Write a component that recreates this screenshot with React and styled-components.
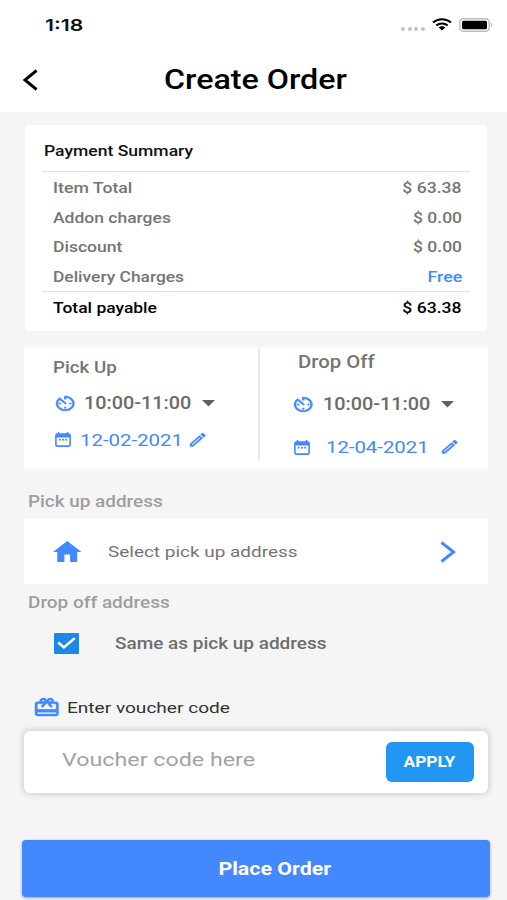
import React from 'react';
import styled, { createGlobalStyle } from 'styled-components';

const GlobalStyle = createGlobalStyle`
  * { box-sizing: border-box; }
  body { margin: 0; background: #f5f5f5; font-family: Roboto, sans-serif; overflow: hidden; }
`;

const Screen = styled.main`
  width: 507px;
  height: 900px;
  overflow: hidden;
  display: flex;
  flex-direction: column;
  background: #f5f5f5;
`;

const Text = styled.span`
  display: block;
  flex: none;
  margin: 0;
  white-space: nowrap;
  font-size: ${(p) => p.$size || 15}px;
  font-weight: ${(p) => p.$weight || 500};
  color: ${(p) => p.$color || '#757575'};
  transform: scaleX(${(p) => p.$stretch || 1.17});
  transform-origin: ${(p) => p.$origin || 'left'} center;
`;

const Icon = styled.svg.attrs({ preserveAspectRatio: 'none', 'aria-hidden': true })`
  display: block;
  flex: none;
  overflow: visible;
  width: ${(p) => p.$w}px;
  height: ${(p) => p.$h}px;
  fill: ${(p) => p.$color || '#4388fd'};
`;

const BoldIcon = styled(Icon)`
  stroke: #4388fd;
  stroke-width: 0.4;
`;

const Header = styled.header`
  height: 111.5px;
  flex: none;
  background: #fff;
`;

const StatusBar = styled.div`
  height: 49px;
  padding: 0 14.5px 0 44.5px;
  display: flex;
  align-items: center;
  justify-content: space-between;
`;

const Clock = styled(Text)`
  font-family: Inter, sans-serif;
`;

const StatusIcons = styled.div`
  display: flex;
  align-items: center;
  gap: 7px;
`;

const SignalDots = styled.div`
  display: flex;
  gap: 2.5px;
  padding-top: 9px;
`;

const Dot = styled.i`
  width: 4px;
  height: 4px;
  border-radius: 50%;
  background: #c4c4c4;
`;

const TitleBar = styled.div`
  height: 61px;
  display: grid;
  grid-template-columns: 23px 141px 1fr;
  align-items: center;
`;

const BackIcon = styled(Icon)`
  grid-column: 2;
  margin-top: 1px;
`;

const Card = styled.section`
  flex: none;
  background: #fff;
  margin: 0 19px 0 24px;
`;

const SummaryCard = styled(Card)`
  margin: 13.5px 20px 0 25px;
  height: 206px;
  border-radius: 4px;
  padding: 4px 17px 0;
`;

const SummaryTitle = styled.div`
  height: 43px;
  padding: 1px 0 0 2px;
  display: flex;
  align-items: center;
  border-bottom: 1px solid #e2e2e2;
`;

const SummaryRows = styled.div`
  height: 120px;
  padding-top: 1px;
  border-bottom: 1px solid #e2e2e2;
`;

const SummaryRow = styled.div`
  height: 29.75px;
  padding: 0 8px 0 11px;
  display: flex;
  align-items: center;
  justify-content: space-between;
`;

const TotalRow = styled(SummaryRow)`
  height: 31px;
`;

const ScheduleCard = styled(Card)`
  margin-top: 15.5px;
  height: 122px;
  display: grid;
  grid-template-columns: 234px 2px 1fr;
`;

const Divider = styled.div`
  height: 113px;
  margin-top: 1px;
  background: #e8e8e8;
`;

const Slot = styled.div`
  padding: ${(p) => p.$pad};
`;

const SlotLine = styled.div`
  display: flex;
  align-items: center;
  height: ${(p) => p.$h}px;
  padding-left: ${(p) => p.$indent || 0}px;
`;

const SlotValue = styled.div`
  width: ${(p) => p.$w}px;
  margin-left: ${(p) => p.$gap}px;
`;

const SectionLabel = styled.div`
  flex: none;
  height: ${(p) => p.$h}px;
  padding: ${(p) => p.$top || 0}px 0 0 27.5px;
  display: flex;
  align-items: center;
`;

const AddressCard = styled(Card)`
  height: 65.5px;
  padding: 1px 33px 0 28.5px;
  display: flex;
  align-items: center;
`;

const AddressText = styled.div`
  flex: 1;
  margin-left: 26.5px;
`;

const CheckRow = styled.label`
  flex: none;
  height: 44px;
  padding-left: 53.5px;
  display: flex;
  align-items: center;
  gap: 36.5px;
`;

const CheckBox = styled.span`
  width: 25px;
  height: 21px;
  border-radius: 1px;
  background: #1e88e5;
  display: grid;
  place-items: center;
`;

const VoucherLabel = styled.div`
  flex: none;
  height: 36px;
  margin-top: 24.5px;
  padding-left: 35px;
  display: flex;
  align-items: center;
  gap: 8.5px;
`;

const GiftIcon = styled(BoldIcon)`
  margin-bottom: 2px;
`;

const VoucherBox = styled(Card)`
  margin-top: 5.5px;
  height: 62px;
  border-radius: 6px;
  box-shadow: 0 0 6px 1px rgba(0, 0, 0, 0.18);
  padding: 0 14px 0 38px;
  display: flex;
  align-items: center;
  justify-content: space-between;
`;

const Placeholder = styled.div`
  padding-bottom: 4px;
`;

const ApplyButton = styled.button`
  width: 88.5px;
  height: 40px;
  padding: 0;
  border: 0;
  border-radius: 6px;
  background: #2196f3;
  font-family: inherit;
  display: grid;
  place-items: center;
`;

const PlaceOrderButton = styled.button`
  flex: none;
  margin: 47px 17.5px 0 22px;
  height: 57px;
  padding: 0 0 0 37px;
  border: 0;
  border-radius: 4px;
  background: #4388fe;
  box-shadow: 0 1px 3px rgba(0, 0, 0, 0.35);
  font-family: inherit;
  display: grid;
  place-items: center;
`;

const charges = [
  { label: 'Item Total', stretch: 1.18, value: '$ 63.38', valueStretch: 1.172 },
  { label: 'Addon charges', stretch: 1.166, value: '$ 0.00', valueStretch: 1.165 },
  { label: 'Discount', stretch: 1.17, value: '$ 0.00', valueStretch: 1.165 },
  { label: 'Delivery Charges', stretch: 1.16, value: 'Free', valueStretch: 1.19, color: '#4388fd' },
];

const TimerIcon = () => (
  <BoldIcon viewBox="3 3 18 18" $w={18.5} $h={15}>
    <path d="M11 17c0 .55.45 1 1 1s1-.45 1-1-.45-1-1-1-1 .45-1 1zm0-14v4h2V5.08c3.39.49 6 3.39 6 6.92 0 3.87-3.13 7-7 7s-7-3.13-7-7c0-1.68.59-3.22 1.58-4.42L12 13l1.41-1.41-6.8-6.8v.02C4.42 6.45 3 9.05 3 12c0 4.97 4.02 9 9 9 4.97 0 9-4.03 9-9s-4.03-9-9-9h-1zm7 9c0-.55-.45-1-1-1s-1 .45-1 1 .45 1 1 1 1-.45 1-1zM6 12c0 .55.45 1 1 1s1-.45 1-1-.45-1-1-1-1 .45-1 1z" />
  </BoldIcon>
);

const CalendarIcon = () => (
  <Icon viewBox="0 0 16 15" $w={16} $h={15}>
    <path d="M3.500 0v2.500M12.500 0v2.500" stroke="#4388fd" strokeWidth="1.500" />
    <rect x=".9" y="2.100" width="14.200" height="12" rx="1.300" fill="none" stroke="#4388fd" strokeWidth="1.600" />
    <path d="M1 2h14v3.600H1zM3.800 7h2v1.600h-2zM7 7h2v1.600H7zM10.200 7h2v1.600h-2z" />
  </Icon>
);

const PencilIcon = () => (
  <BoldIcon viewBox="3 3 18 18" $w={15.5} $h={13.5}>
    <path d="M14.060 9.020l.92.92L5.920 19H5v-.92l9.060-9.060M17.660 3c-.25 0-.51.1-.7.29l-1.830 1.830 3.750 3.750 1.830-1.830c.39-.39.39-1.020 0-1.410l-2.340-2.340c-.2-.2-.45-.29-.71-.29zm-3.600 3.190L3 17.250V21h3.750L17.810 9.940l-3.750-3.750z" />
  </BoldIcon>
);

const CaretIcon = () => (
  <Icon viewBox="0 0 13 7" $w={13} $h={6.5} $color="#616161">
    <path d="M0 0h13L6.500 7z" />
  </Icon>
);

const WifiIcon = () => (
  <Icon viewBox="0 0 20 13" $w={20} $h={12.5} $color="#000">
    <path d="M1 4.600C6 .1 14 .1 19 4.600M4.300 7.800c3.300-2.800 8.100-2.800 11.400 0" fill="none" stroke="#000" strokeWidth="2.100" />
    <path d="M10 8.700c-1.300 0-2.500.5-3.300 1.200L10 12.900l3.300-3c-.8-.7-2-1.200-3.300-1.200z" />
  </Icon>
);

const BatteryIcon = () => (
  <Icon viewBox="0 0 34 14" $w={34} $h={14} $color="#000">
    <rect x=".8" y=".8" width="29.400" height="12.400" rx="3.500" fill="none" stroke="#bdbdbd" strokeWidth="1.400" />
    <rect x="3" y="2.800" width="25" height="8.400" rx="1.500" />
    <path d="M31.700 5v4c1.100-.3 1.700-1 1.700-2s-.6-1.700-1.700-2z" fill="#bdbdbd" />
  </Icon>
);

export default function App() {
  return (
    <Screen>
      <GlobalStyle />
      <Header>
        <StatusBar>
          <Clock $size={16.5} $weight={600} $stretch={1.284} $color="#111">1:18</Clock>
          <StatusIcons>
            <SignalDots><Dot /><Dot /><Dot /><Dot /></SignalDots>
            <WifiIcon />
            <BatteryIcon />
          </StatusIcons>
        </StatusBar>
        <TitleBar>
          <BackIcon viewBox="0 0 16 22" $w={15.5} $h={22}>
            <path d="M14 1.500L2 11l12 9.500" fill="none" stroke="#000" strokeWidth="2.900" />
          </BackIcon>
          <Text as="h1" $size={27} $stretch={1.194} $color="#000">Create Order</Text>
        </TitleBar>
      </Header>

      <SummaryCard>
        <SummaryTitle><Text $stretch={1.17} $color="#111">Payment Summary</Text></SummaryTitle>
        <SummaryRows>
          {charges.map((c) => (
            <SummaryRow key={c.label}>
              <Text $stretch={c.stretch}>{c.label}</Text>
              <Text $stretch={c.valueStretch} $origin="right" $color={c.color}>{c.value}</Text>
            </SummaryRow>
          ))}
        </SummaryRows>
        <TotalRow>
          <Text $stretch={1.164} $color="#000">Total payable</Text>
          <Text $stretch={1.172} $origin="right" $color="#000">$ 63.38</Text>
        </TotalRow>
      </SummaryCard>

      <ScheduleCard>
        <Slot $pad="9px 0 0 28.5px">
          <SlotLine $h={24}><Text $size={16.5} $stretch={1.136}>Pick Up</Text></SlotLine>
          <SlotLine $h={47} $indent={3}>
            <TimerIcon />
            <SlotValue $w={118} $gap={9.5}><Text $size={17.5} $stretch={1.132} $color="#6b6b6b">10:00-11:00</Text></SlotValue>
            <CaretIcon />
          </SlotLine>
          <SlotLine $h={26} $indent={2}>
            <CalendarIcon />
            <SlotValue $w={110} $gap={9.5}><Text $size={17} $weight={400} $stretch={1.2} $color="#4388fd">12-02-2021</Text></SlotValue>
            <PencilIcon />
          </SlotLine>
        </Slot>
        <Divider />
        <Slot $pad="3px 0 0 33px">
          <SlotLine $h={24} $indent={4.5}><Text $size={17.5} $stretch={1.162}>Drop Off</Text></SlotLine>
          <SlotLine $h={61} $indent={1}>
            <TimerIcon />
            <SlotValue $w={118} $gap={10}><Text $size={17.5} $stretch={1.132} $color="#6b6b6b">10:00-11:00</Text></SlotValue>
            <CaretIcon />
          </SlotLine>
          <SlotLine $h={25} $indent={0.5}>
            <CalendarIcon />
            <SlotValue $w={116.5} $gap={16}><Text $size={17} $weight={400} $stretch={1.195} $color="#4388fd">12-04-2021</Text></SlotValue>
            <PencilIcon />
          </SlotLine>
        </Slot>
      </ScheduleCard>

      <SectionLabel $h={50} $top={15}>
        <Text $size={16.5} $stretch={1.145} $color="#9e9e9e">Pick up address</Text>
      </SectionLabel>
      <AddressCard>
        <Icon viewBox="2 3 20 17" $w={28.5} $h={21}>
          <path d="M10 20v-6h4v6h5v-8h3L12 3 2 12h3v8z" />
        </Icon>
        <AddressText><Text $size={15.5} $weight={400} $stretch={1.222}>Select pick up address</Text></AddressText>
        <Icon viewBox="0 0 16 22" $w={15.5} $h={22}>
          <path d="M1.500 1.500L14 11 1.500 20.500" fill="none" stroke="#4388fd" strokeWidth="3" />
        </Icon>
      </AddressCard>
      <SectionLabel $h={37}>
        <Text $size={16.5} $stretch={1.15} $color="#9e9e9e">Drop off address</Text>
      </SectionLabel>
      <CheckRow>
        <CheckBox>
          <Icon viewBox="0 0 18 12" $w={19} $h={12}>
            <path d="M1.200 5.500L6.500 10.300 16.800 1.200" fill="none" stroke="#fff" strokeWidth="2.400" />
          </Icon>
        </CheckBox>
        <Text $size={16.5} $stretch={1.149} $color="#6e6e6e">Same as pick up address</Text>
      </CheckRow>

      <VoucherLabel>
        <GiftIcon viewBox="2 2 20 19" $w={23.5} $h={18}>
          <path d="M20 6h-2.180c.11-.31.18-.65.18-1 0-1.660-1.340-3-3-3-1.050 0-1.960.54-2.500 1.350l-.5.670-.5-.68C10.960 2.540 10.050 2 9 2 7.340 2 6 3.340 6 5c0 .35.070.69.180 1H4c-1.110 0-1.990.89-1.990 2L2 19c0 1.110.89 2 2 2h16c1.110 0 2-.89 2-2V8c0-1.110-.89-2-2-2zm-5-2c.55 0 1 .45 1 1s-.45 1-1 1-1-.45-1-1 .45-1 1-1zM9 4c.55 0 1 .45 1 1s-.45 1-1 1-1-.45-1-1 .45-1 1-1zm11 15H4v-2h16v2zm0-5H4V8h5.080L7 10.830 8.620 12 12 7.400l3.380 4.600L17 10.830 14.920 8H20v6z" />
        </GiftIcon>
        <Text $size={15.5} $weight={400} $stretch={1.23} $color="#333">Enter voucher code</Text>
      </VoucherLabel>
      <VoucherBox>
        <Placeholder>
          <Text $size={17.5} $weight={400} $stretch={1.328} $color="#a3a3a3">Voucher code here</Text>
        </Placeholder>
        <ApplyButton>
          <Text $stretch={1.155} $weight={700} $origin="center" $color="#fff">APPLY</Text>
        </ApplyButton>
      </VoucherBox>

      <PlaceOrderButton>
        <Text $size={18.5} $weight={700} $stretch={1.155} $origin="center" $color="#fff">Place Order</Text>
      </PlaceOrderButton>
    </Screen>
  );
}
